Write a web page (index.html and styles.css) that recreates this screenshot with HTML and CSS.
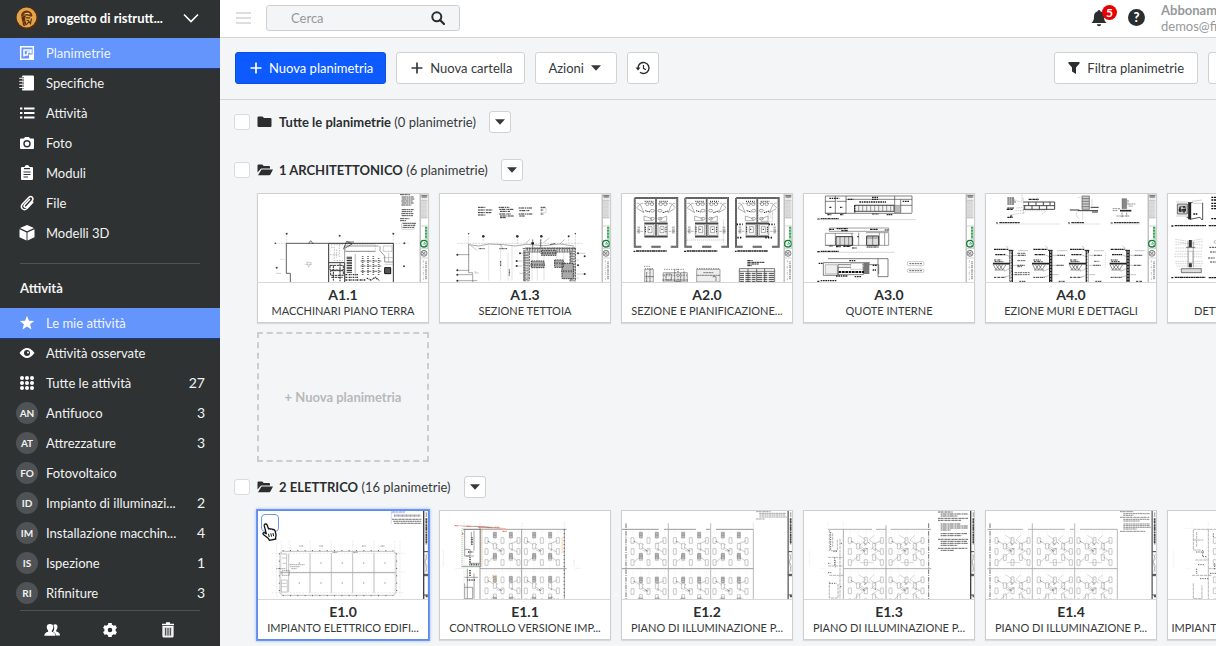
FILE: index.html
```html
<!DOCTYPE html>
<html lang="it">
<head>
<meta charset="utf-8">
<meta name="viewport" content="width=device-width, initial-scale=1">
<title>Planimetrie</title>
<link rel="stylesheet" href="styles.css">
</head>
<body>
<svg class="defs" aria-hidden="true">
  <defs>
    <symbol id="i-caret" viewBox="0 0 10 6"><path d="M0 0.300h10L5 5.800z" fill="currentColor"/></symbol>
    <symbol id="i-plus" viewBox="0 0 12 12"><path d="M6 0.500v11M0.500 6h11" stroke="currentColor" stroke-width="1.700" fill="none"/></symbol>
    <symbol id="i-folder" viewBox="0 0 16 14"><path d="M1.500 1.500h4l1.500 1.500h6.500q1 0 1 1v7q0 1-1 1h-12q-1 0-1-1v-8.500q0-1 1-1z" fill="currentColor"/></symbol>
    <symbol id="i-open" viewBox="0 0 16 14"><path d="M0.500 9.500v-7q0-1 1-1h3.700l1.500 1.500h5.300q1 0 1 1v1.500H4L0.500 9.500z" fill="currentColor"/><path d="M4.500 6.500H16l-2.600 5q-.4.800-1.200.8H1z" fill="currentColor"/></symbol>

    <!-- title block of the architectural sheets -->
    <symbol id="block" viewBox="0 0 26 264">
      <rect width="26" height="264" fill="#fff"/>
      <path d="M1 0v264M3.500 0v264" stroke="#777" stroke-width="1.200"/>
      <rect x="5" y="1" width="20" height="12" fill="#ccc"/>
      <path d="M6 5h18M8 9h14" stroke="#444" stroke-width="2"/>
      <rect x="5" y="18" width="20" height="54" fill="#dedede"/>
      <path d="M5 18h20M5 72h20M5 96h20M5 164h20M5 192h20" stroke="#777"/>
      <path d="M8 20v50M13 20v50M18 20v50" stroke="#aaa" stroke-dasharray="2 2"/>
      <circle cx="14" cy="149" r="10" fill="none" stroke="#137b38" stroke-width="4"/>
      <path d="M10 150h9l-5-7M18 154l5 5" stroke="#137b38" stroke-width="2" fill="none"/>
      <path d="M20 98v38" stroke="#38a355" stroke-width="6" stroke-dasharray="4 1 3 1"/>
      <path d="M24 98v66" stroke="#75c78b" stroke-width="2"/>
      <circle cx="14" cy="178" r="9" fill="#ddd" stroke="#555" stroke-width="2"/><path d="M8 174l11 9M9 183l9-10" stroke="#666" stroke-width="2"/>
      <path d="M12 198v60" stroke="#aaa" stroke-width="2" stroke-dasharray="8 4 2 4"/><path d="M20 202v56" stroke="#888" stroke-width="4" stroke-dasharray="3 1 5 2"/>
    </symbol>
    <!-- title block of the electrical sheets -->
    <symbol id="eblock" viewBox="0 0 16 264">
      <rect width="16" height="264" fill="#fff"/>
      <path d="M2 0v264" stroke="#111" stroke-width="4"/>
      <path d="M14.500 0v264" stroke="#999"/>
      <path d="M10 4v14" stroke="#999" stroke-width="4"/>
      <path d="M10 22v78" stroke="#111" stroke-width="5" stroke-dasharray="5 1 9 1 3 1"/>
      <path d="M3 122h13M3 190h13M3 194h13M3 252h13" stroke="#111" stroke-width="3"/>
      <path d="M6 130l6 12-6 10 6 14-5 18M12 128l-6 26 6 28" fill="none" stroke="#777" stroke-width="1.500"/>
      <path d="M8 256h6" stroke="#222" stroke-width="6"/>
    </symbol>
    <!-- one lighting bay: luminaires and wiring -->
    <symbol id="bay" viewBox="0 0 127 118">
      <path d="M6 8h116M6 37h116M6 66h116M6 95h116M20 4v110M44 4v110M68 4v110M92 4v110M116 4v110" stroke="#c5c5c5" stroke-width="1" stroke-dasharray="2 4"/>
      <g fill="#fff" stroke="#777" stroke-width="1.400">
        <path d="M15 25h9v17h-9zM15 58h9v17h-9zM15 91h9v17h-9zM40 42h9v17h-9zM40 76h9v17h-9zM63 25h9v17h-9zM63 58h9v17h-9zM63 91h9v17h-9zM88 42h9v17h-9zM88 76h9v17h-9zM111 25h9v17h-9zM111 58h9v17h-9zM111 91h9v17h-9z"/>
      </g>
      <path d="M24 35l17 11M48 54l16 11M24 98l20-17M92 44l22-10M95 58l16 10M94 82l17 12M50 62q14 8 20-2" stroke="#777" stroke-width="1.400" fill="none"/>
      <path d="M24 35l3 4M50 46h2M63 66l-4-5M94 62h4" stroke="#555" stroke-width="2.500"/>
    </symbol>
    <symbol id="dark" viewBox="0 0 127 118">
      <path d="M40 9h9v17h-9zM88 9h9v17h-9zM40 72h9v17h-9zM88 72h9v17h-9z" fill="#b5b5b5" stroke="#555" stroke-width="1.500"/>
      <path d="M40 14h9M40 19h9M88 14h9M88 19h9M40 77h9M40 82h9M88 77h9M88 82h9" stroke="#555" stroke-width="1.500"/>
    </symbol>
    <symbol id="zig" viewBox="0 0 127 118">
      <path d="M46 18l22 14-20 16 16 12M92 18l-14 14 20 14-16 16M46 80l20-16M84 78l22-14M50 100h40" stroke="#999" stroke-width="1.400" fill="none"/>
      <path d="M60 40l8 6M62 48l8-4M74 38l6 6M66 58h8" stroke="#777" stroke-width="2"/>
    </symbol>
    <!-- restroom plan -->
    <symbol id="room" viewBox="0 0 136 168">
      <path d="M4 4h128v146H112M24 150H4V4M82 150H54" fill="none" stroke="#555" stroke-width="6"/>
      <path d="M4 4h128v146H112M24 150H4V4M82 150H54" fill="none" stroke="#aaa" stroke-width="2" stroke-dasharray="3 2"/>
      <path d="M68 7v114M33 80h70M33 120h70" stroke="#444" stroke-width="5"/><path d="M68 7v114" stroke="#aaa" stroke-width="2" stroke-dasharray="3 2"/>
      <path d="M10 20h52M74 20h52M10 104h20M106 104h20" stroke="#555" stroke-width="1.300" stroke-dasharray="8 3"/>
      <path d="M10 34l10-12 12 26-20-12zM126 34l-10-12-12 26 20-12M32 58l24 8M32 58v14h26M76 68l24-10v16H78" stroke="#666" stroke-width="1.500" fill="none"/>
      <path d="M34 14h26M78 14h26" stroke="#444" stroke-width="4" stroke-dasharray="3 3"/>
      <g fill="none" stroke="#555" stroke-width="1.500"><circle cx="42" cy="22" r="5"/><circle cx="56" cy="22" r="5"/><circle cx="82" cy="22" r="5"/><circle cx="96" cy="22" r="5"/><path d="M34 84h28v32H34zM74 84h28v32H74zM44 90h12v18H44zM80 90h12v18H80z"/><ellipse cx="57" cy="42" rx="6" ry="4"/><ellipse cx="57" cy="66" rx="6" ry="4"/><ellipse cx="80" cy="42" rx="6" ry="4"/><ellipse cx="80" cy="66" rx="6" ry="4"/></g>
      <path d="M36 42l14 4M88 48l16-5M46 98h6M84 98h6M36 90v20M98 90v20" stroke="#222" stroke-width="3" stroke-dasharray="4 2"/>
      <path d="M16 90v22M120 90v22" stroke="#777" stroke-width="8" stroke-dasharray="1.500 2"/>
      <path d="M0 164h6M8 163h92" stroke="#222" stroke-width="4" stroke-dasharray="9 1 5 1"/>
    </symbol>
    <!-- wall section -->
    <symbol id="wall" viewBox="0 0 116 116">
      <path d="M4 14h42M8 30h30" stroke="#222" stroke-width="4" stroke-dasharray="7 1 4 1"/>
      <path d="M4 46h22M6 51h26M4 98h34M76 32h24M74 62h22M80 110h20" stroke="#333" stroke-width="3" stroke-dasharray="6 2 3 1"/>
      <path d="M46 14l8 6M38 30l14 6M76 18h30M34 80l18-8M34 98l16-5M40 4l8 7M60 32h38M60 62h34M60 90h20" stroke="#777" stroke-width="1.300"/>
      <path d="M0 57h52" stroke="#222" stroke-width="5"/>
      <path d="M2 60l8 15 10-15 10 15 10-15M6 76h30M10 60l10 15 10-15" stroke="#555" fill="none" stroke-width="2"/>
      <path d="M56 18v98" stroke="#222" stroke-width="10"/><path d="M56 20v96" stroke="#bbb" stroke-width="4" stroke-dasharray="4 5"/>
      <path d="M48 17h14" stroke="#111" stroke-width="3"/>
    </symbol>
  </defs>
</svg>

<div class="app">
  <aside class="sidebar">
    <button class="project" type="button">
      <svg class="avatar" viewBox="0 0 22 22"><circle cx="11" cy="11" r="11" fill="#5a2f0c"/><circle cx="10.500" cy="10.500" r="9.900" fill="#e2a54e"/><path d="M5 9.500Q5 4 10.500 3.500 16 4 16.500 9l-1.500.8Q10 7.500 5 9.500z" fill="#6b3510"/><path d="M7.500 7.500Q9 5 13 6l1.500 1.700Q11 6.500 7.500 7.500z" fill="#f3c06c"/><path d="M6 10.200l3-.7-.5 3 1 4-2.500-1.800zM10 10.800h4M10.500 13.500h2.500M8 18.500l3-1.500 2-2.500 1.500 2 1-5" stroke="#5a2f0c" stroke-width="1.200" fill="none"/><path d="M6 10l2-.5.5 5-1.500-.5zM6.500 15l2.500 2-2 2z" fill="#5a2f0c"/></svg>
      <strong>progetto di ristrutt...</strong>
      <svg class="chev" viewBox="0 0 16 10"><path d="M1 1.500l7 7 7-7" fill="none" stroke="#fff" stroke-width="1.600"/></svg>
    </button>
    <nav aria-label="Progetto">
      <a class="item active" href="#"><span class="ico"><svg viewBox="0 0 16 16"><path d="M1.700 1.700h12.600v12.600H1.700z" fill="none" stroke="#fff" stroke-width="1.500"/><path d="M5 11.500V5h7v3.500M5 5h7v2H8.500v3H5z" fill="none" stroke="#fff" stroke-width="1.500"/><path d="M10 9.500h5V15h-5z" fill="#fff"/></svg></span>Planimetrie</a>
      <a class="item" href="#"><span class="ico"><svg viewBox="0 0 16 16"><path d="M4 .5h10q1 0 1 1v13q0 1-1 1H4q-1 0-1-1v-13q0-1 1-1z" fill="#fff"/><path d="M1 3.300h4M1 6.300h4M1 9.300h4M1 12.500h4" stroke="#2e3233" stroke-width="2.200"/><path d="M.7 3.300h4M.7 6.300h4M.7 9.300h4M.7 12.500h4" stroke="#fff" stroke-width="1.100" stroke-linecap="round"/></svg></span>Specifiche</a>
      <a class="item" href="#"><span class="ico"><svg viewBox="0 0 16 16"><path d="M1 3.500h2.400M1 8h2.400M1 12.500h2.400M5 3.500h10.500M5 8h10.500M5 12.500h10.500" stroke="#fff" stroke-width="2.200"/></svg></span>Attività</a>
      <a class="item" href="#"><span class="ico"><svg viewBox="0 0 16 16"><path d="M2 3.500h3l1-1.500h4l1 1.500h3q1 0 1 1V13q0 1-1 1H2q-1 0-1-1V4.500q0-1 1-1z" fill="#fff"/><circle cx="8" cy="8.700" r="3" fill="none" stroke="#2e3233" stroke-width="1.400"/></svg></span>Foto</a>
      <a class="item" href="#"><span class="ico"><svg viewBox="0 0 16 16"><path d="M3 2h2.500q.5-2 2.500-2t2.500 2H13q1 0 1 1v11q0 1-1 1H3q-1 0-1-1V3q0-1 1-1z" fill="#fff"/><path d="M5 3.700h6M4.500 7h7M4.500 9.500h7M4.500 12h4.500" stroke="#2e3233" stroke-width="1.200"/></svg></span>Moduli</a>
      <a class="item" href="#"><span class="ico"><svg viewBox="0 0 16 16"><path d="M10.500 4.500l-5 5.300q-1 1.500.2 2.300 1 .6 2-.4l5.500-6q1.500-2 0-3.500-1.800-1.400-3.500.3L3.500 9q-2.200 2.700-.2 4.800 2.200 1.900 4.700-.3l5.800-6.200" fill="none" stroke="#fff" stroke-width="1.500" stroke-linecap="round"/></svg></span>File</a>
      <a class="item" href="#"><span class="ico"><svg viewBox="0 0 16 16"><path d="M8 0l7 3-7 3.300L1 3zM.5 4.300l7 3.200V15.500l-7-3.300zM15.500 4.300l-7 3.200V15.500l7-3.300z" fill="#fff"/></svg></span>Modelli 3D</a>
    </nav>
    <hr>
    <h2>Attività</h2>
    <nav aria-label="Attività">
      <a class="item active" href="#"><span class="ico"><svg viewBox="0 0 16 16"><path d="M8 .8l1.900 4.900 5.300.3-4.100 3.300 1.400 5.100L8 11.500l-4.500 2.900 1.400-5.100L.8 6l5.300-.3z" fill="#fff"/></svg></span>Le mie attività</a>
      <a class="item" href="#"><span class="ico"><svg viewBox="0 0 16 16"><path d="M.5 8Q8-2 15.500 8 8 18 .5 8z" fill="#fff"/><circle cx="8" cy="8" r="3" fill="#2e3233"/><circle cx="9" cy="7.500" r="1" fill="#fff"/></svg></span>Attività osservate</a>
      <a class="item" href="#"><span class="ico"><svg viewBox="0 0 16 16"><g fill="#fff"><circle cx="3" cy="3" r="2"/><circle cx="8" cy="3" r="2"/><circle cx="13" cy="3" r="2"/><circle cx="3" cy="8" r="2"/><circle cx="8" cy="8" r="2"/><circle cx="13" cy="8" r="2"/><circle cx="3" cy="13" r="2"/><circle cx="8" cy="13" r="2"/><circle cx="13" cy="13" r="2"/></g></svg></span>Tutte le attività<b>27</b></a>
      <a class="item" href="#"><span class="badge">AN</span>Antifuoco<b>3</b></a>
      <a class="item" href="#"><span class="badge">AT</span>Attrezzature<b>3</b></a>
      <a class="item" href="#"><span class="badge">FO</span>Fotovoltaico</a>
      <a class="item" href="#"><span class="badge">ID</span>Impianto di illuminazi...<b>2</b></a>
      <a class="item" href="#"><span class="badge">IM</span>Installazione macchin...<b>4</b></a>
      <a class="item" href="#"><span class="badge">IS</span>Ispezione<b>1</b></a>
      <a class="item" href="#"><span class="badge">RI</span>Rifiniture<b>3</b></a>
    </nav>
    <div class="tools">
      <button type="button" aria-label="Persone"><svg viewBox="0 0 16 16"><path d="M10 2.500q3.500-.8 3.500 2.500 0 2-1.300 3.300v1.200q3.800.8 3.800 4h-4q0-2.500-3-3.500 1.500-2 1.200-4.500 0-1.800-1-2.300z" fill="#fff"/><path d="M6 2q3.300 0 3.300 3.300 0 2-1.500 3.400v1.100q3.700.8 3.700 3.900H.3q0-3.100 3.900-3.900V8.700Q2.700 7.300 2.700 5.300 2.700 2 6 2z" fill="#fff"/></svg></button>
      <button type="button" aria-label="Impostazioni"><svg viewBox="0 0 16 16"><circle cx="8" cy="8" r="4" fill="none" stroke="#fff" stroke-width="3.400"/><path d="M8 1v3M8 12v3M1.900 4.500l2.600 1.500M11.500 10l2.600 1.500M1.900 11.500L4.500 10M11.500 6l2.600-1.500" stroke="#fff" stroke-width="3.600"/></svg></button>
      <button type="button" aria-label="Cestino"><svg viewBox="0 0 16 16"><path d="M2 2.500h12M6 1.200h4" stroke="#fff" stroke-width="1.700"/><path d="M3 4.500h10V14q0 1-1 1H4q-1 0-1-1z" fill="#ddd" stroke="#fff" stroke-width="1.200"/><path d="M5.700 6v7.500M8 6v7.500M10.300 6v7.500" stroke="#2e3233" stroke-width="1"/></svg></button>
    </div>
  </aside>

  <main class="main">
    <header class="topbar">
      <button class="menu" type="button" aria-label="Menu"><svg viewBox="0 0 15 14"><path d="M0 2h15M0 7h15M0 12h15" stroke="#dedede" stroke-width="2"/></svg></button>
      <form class="search" role="search">
        <input type="search" placeholder="Cerca" aria-label="Cerca">
        <button type="button" aria-label="Avvia ricerca"><svg viewBox="0 0 14 14"><circle cx="5.800" cy="5.800" r="4.500" fill="none" stroke="#2b2e2f" stroke-width="2"/><path d="M9 9l4 4" stroke="#2b2e2f" stroke-width="2.300" stroke-linecap="round"/></svg></button>
      </form>
      <div class="user">
        <button class="bell" type="button" aria-label="Notifiche"><svg viewBox="0 0 16 18"><path d="M8 1q1.300 0 1.300 1.300 3.700 1 3.700 5.200 0 4.500 2.500 6.500H.5Q3 12 3 7.500q0-4.200 3.700-5.200Q6.700 1 8 1zM5.800 15.300h4.400Q10 17.300 8 17.300t-2.200-2z" fill="#2b2e2f"/></svg><span class="count">5</span></button>
        <button class="help" type="button" aria-label="Aiuto">?</button>
        <a class="account" href="#"><strong>Abbonamento</strong><span>demos@fieldwire</span></a>
      </div>
    </header>

    <div class="toolbar">
      <button class="btn primary" type="button"><svg class="plus"><use href="#i-plus"/></svg>Nuova planimetria</button>
      <button class="btn" type="button"><svg class="plus"><use href="#i-plus"/></svg>Nuova cartella</button>
      <button class="btn" type="button">Azioni<svg class="caret"><use href="#i-caret"/></svg></button>
      <button class="btn square" type="button" aria-label="Cronologia"><svg viewBox="0 0 16 16"><path d="M3 9V8a5.500 5.500 0 1 1 2 4.200" fill="none" stroke="#2b2e2f" stroke-width="1.400"/><path d="M.5 7.500h5L3 10.600z" fill="#2b2e2f"/><path d="M8.500 5v3.300l2.300 1.400" fill="none" stroke="#2b2e2f" stroke-width="1.200"/></svg></button>
      <div class="right">
        <button class="btn filter" type="button"><svg viewBox="0 0 12 12"><path d="M.5 0h11v1.500L8 5.500V12L4 9.500v-4L.5 1.500z" fill="#2b2e2f"/></svg>Filtra planimetrie</button>
        <button class="btn square" type="button" aria-label="Vista"></button>
      </div>
    </div>

    <div class="content">
      <section>
        <div class="folder"><input type="checkbox" id="f0"><svg class="fi"><use href="#i-folder"/></svg><label for="f0"><strong>Tutte le planimetrie</strong> (0 planimetrie)</label><button type="button" aria-label="Apri menu"><svg class="caret"><use href="#i-caret"/></svg></button></div>
      </section>

      <section>
        <div class="folder"><input type="checkbox" id="f1"><svg class="fi"><use href="#i-open"/></svg><label for="f1"><strong>1 ARCHITETTONICO</strong> (6 planimetrie)</label><button type="button" aria-label="Apri menu"><svg class="caret"><use href="#i-caret"/></svg></button></div>
        <div class="cards">
          <a class="card" href="#">
            <svg class="plan" viewBox="24 24 510 264" preserveAspectRatio="xMidYMin slice">
              <use href="#block" x="508" y="24" width="26" height="264"/>
              <path d="M450 26h30M455 33h36M455 39h38M454 45h34M455 51h36M454 57h30M455 71h36M455 77h32M454 83h36M455 89h34M450 98h28M450 104h18M458 112h40M460 118h36M458 124h34" stroke="#555" stroke-width="3" stroke-dasharray="13 1 7 1 4 1"/>
              <rect x="455" y="112" width="38" height="18" rx="3" fill="none" stroke="#777"/>
              <path d="M76 172h400M110 140v34M430 140v34" stroke="#999" stroke-dasharray="6 3"/>
              <path d="M109 172h127M109 172v90h12v26" stroke="#444" stroke-width="2.500" fill="none"/>
              <path d="M236 172h194v116M236 172v116M236 230h48v58" stroke="#333" stroke-width="3" fill="none"/>
              <path d="M284 230v-50h102M390 180v14l14 16v18h26M286 196h90" stroke="#666" stroke-width="2" fill="none"/>
              <path d="M286 176h90v20h-90z" fill="none" stroke="#666" stroke-dasharray="3 2"/>
              <path d="M243 176h36M243 184h10v40h26M268 176v40M260 190v26M240 206h26" fill="none" stroke="#888" stroke-width="1.500" stroke-dasharray="5 3"/>
              <path d="M294 212v50M302 212v50" stroke="#333" stroke-width="8" stroke-dasharray="3 2"/>
              <path d="M316 206v62M338 210v56M354 210v56M370 210v56M386 216v50" stroke="#444" stroke-width="5" stroke-dasharray="2 4"/>
              <path d="M332 225h62M332 240h62M332 256h62" stroke="#333" stroke-width="2" stroke-dasharray="14 4"/>
              <path d="M240 238h40v14h-40zM242 254h38v14h-38zM250 238v46M270 232v54M244 274h34" stroke="#333" fill="none" stroke-width="3" stroke-dasharray="8 2"/>
              <path d="M286 266h40M286 274h38M286 282h60M350 276l12 6 14-8 12 10" stroke="#333" stroke-width="4" stroke-dasharray="5 2 2 2" fill="none"/>
              <path d="M404 245h18v18h-18z" fill="#555" stroke="#111" stroke-width="3"/><path d="M400 180h26v16h-26zM416 200v30M400 215h28M404 235h24" fill="none" stroke="#666"/>
              <path d="M280 190l10-24 16 8-20 12M176 172l6-8 8 10M292 168h20" stroke="#222" stroke-width="2" fill="none"/>
              <path d="M164 235h22M170 228l6 16 8-14zM78 262h16M78 244h6" stroke="#777" fill="none"/><path d="M90 220h14" stroke="#da987e"/>
              <g fill="#444"><circle cx="269" cy="149" r="3"/><circle cx="110" cy="143" r="3"/><circle cx="430" cy="143" r="3"/><circle cx="76" cy="172" r="2.500"/><circle cx="463" cy="172" r="3"/><circle cx="462" cy="241" r="3"/><circle cx="80" cy="245" r="3"/></g>
            </svg>
            <span class="cap"><strong>A1.1</strong><span>MACCHINARI PIANO TERRA</span></span>
          </a>
          <a class="card" href="#">
            <svg class="plan" viewBox="570 24 510 264" preserveAspectRatio="xMidYMin slice">
              <use href="#block" x="1054" y="24" width="26" height="264"/>
              <path d="M684 64h24M684 72h44M684 80h40M684 87h24M746 64h32M748 70h44M750 76h30M748 84h34M750 90h42M750 95h18M806 66h40M808 74h30M806 84h42M808 90h16M872 64h14M872 72h8M872 84h8" stroke="#333" stroke-width="3" stroke-dasharray="6 1 10 2 3 2"/>
              <path d="M874 66h14v14h-14z" fill="none" stroke="#888"/>
              <path d="M622 172h374M656 140v120M976 140v50M700 150v20M802 150v24M874 150v24M956 150v20" stroke="#888" stroke-dasharray="6 3"/>
              <path d="M656 174v86h12v28M656 176l30 4 30-6 44 2 36 4 34-5 50 4 50-5 42 6M622 206h36M622 253h34M622 266h44M622 284h60" stroke="#555" stroke-width="1.500" fill="none"/>
              <path d="M716 178v106M752 178v106M774 200v84M786 180v104" stroke="#aaa"/><path d="M752 225v15M778 250v20M686 188h18M748 188h24" stroke="#444" stroke-width="3" stroke-dasharray="3 1"/>
              <path d="M662 178l20 16M760 190l-10-16M826 172l14-12M880 170l18-14M944 160l-14 14M676 255v6h10" stroke="#555" fill="none"/>
              <path d="M848 160v28M872 160v28M900 176l16-4" stroke="#333" stroke-width="2"/><path d="M844 172h8" stroke="#111" stroke-width="6"/>
              <path d="M826 192h142v94M828 192v94" stroke="#888" stroke-width="16" fill="none" stroke-dasharray="4 1"/><path d="M818 188h158M822 196v90M838 200v84M960 200v86M976 186v100" stroke="#444" stroke-width="2.500" fill="none" stroke-dasharray="7 2"/><path d="M826 192h146v90M830 194v90" stroke="#eee" stroke-width="5" fill="none" stroke-dasharray="3 5"/>
              <path d="M846 192v92M862 198v86M882 210v74M920 192v30M940 192v30" stroke="#aaa"/>
              <path d="M844 225h38v20h-38zM914 222h26v22h-26zM936 232h34v46h-34zM874 194h44v14h-44z" fill="#aaa" stroke="#444" stroke-width="3" stroke-dasharray="5 2"/>
              <path d="M842 236h44M912 232h32M934 256h38M876 201h42" stroke="#444" stroke-width="6" stroke-dasharray="2 3"/>
              <path d="M798 225h20M798 240h20M808 202h12M808 262h12M980 202h26M980 222h6M980 238h6M980 264h26M980 276h6" stroke="#666"/>
              <g fill="#333"><circle cx="700" cy="151" r="4"/><circle cx="802" cy="151" r="4"/><circle cx="874" cy="151" r="4"/><circle cx="956" cy="151" r="3"/><circle cx="622" cy="206" r="3"/><circle cx="622" cy="253" r="3"/><circle cx="622" cy="266" r="3"/><circle cx="622" cy="284" r="3"/><circle cx="1004" cy="211" r="3"/><circle cx="1004" cy="264" r="3"/><circle cx="984" cy="202" r="3"/><circle cx="984" cy="238" r="3"/><circle cx="810" cy="202" r="3"/><circle cx="800" cy="225" r="3"/><circle cx="800" cy="240" r="3"/><circle cx="656" cy="143" r="2"/><circle cx="976" cy="143" r="2"/></g>
            </svg>
            <span class="cap"><strong>A1.3</strong><span>SEZIONE TETTOIA</span></span>
          </a>
          <a class="card" href="#">
            <svg class="plan" viewBox="18 24 510 264" preserveAspectRatio="xMidYMin slice">
              <use href="#block" x="502" y="24" width="26" height="264"/>
              <use href="#room" x="52" y="32" width="136" height="168"/><use href="#room" x="204" y="32" width="136" height="168"/><use href="#room" x="356" y="32" width="136" height="168"/>
              <path d="M456 78h14v28h-14M456 84h14M456 90h14M456 96h14M212 162h116M212 126v44M322 100v70" stroke="#777" fill="none" stroke-dasharray="4 2"/>
              <path d="M362 115h18M458 115h18M364 155h16M448 155h20" stroke="#111" stroke-width="5" stroke-dasharray="4 4"/>
              <path d="M86 250h26v38h-26zM142 260h72v28h-72zM242 250h70v38h-70z" fill="#eee" stroke="#555" stroke-width="1.500"/>
              <path d="M84 241h20M86 248h28M144 250h60M242 248h70" stroke="#555" stroke-width="2" stroke-dasharray="4 3"/>
              <path d="M92 258v30M102 250v38M88 272h26M150 264h16v18h-16zM176 250v36h18v-26M138 282h78M204 256v30M242 268h70M290 272h10v14M262 260h30" stroke="#444" stroke-width="2" fill="none" stroke-dasharray="7 1"/>
              <path d="M140 268h74M186 250v36" stroke="#777" stroke-width="5" stroke-dasharray="2 3"/>
              <path d="M394 224h16M394 229h52M394 234h34M394 239h14" stroke="#222" stroke-width="3" stroke-dasharray="8 1 4 1"/>
              <path d="M370 248h106v40M370 248v40M370 256h106M396 248v40M422 248v40M446 248v40" stroke="#333" fill="none" stroke-width="2"/>
              <path d="M372 262h102M372 268h102M372 274h102M372 280h102M372 286h102" stroke="#444" stroke-width="3" stroke-dasharray="12 4 16 3"/>
            </svg>
            <span class="cap"><strong>A2.0</strong><span>SEZIONE E PIANIFICAZIONE...</span></span>
          </a>
          <a class="card" href="#">
            <svg class="plan" viewBox="564 24 510 264" preserveAspectRatio="xMidYMin slice">
              <use href="#block" x="1048" y="24" width="26" height="264"/>
              <path d="M628 30h62v52h-62zM658 30v52M690 30h198v50M716 58h120M854 40v40M628 46h30M662 46h30M836 30v50M690 40h198M888 58h-34M628 82h260" stroke="#444" fill="none" stroke-width="2"/>
              <path d="M716 58h118v18H716z" fill="#f3f3f3" stroke="#333" stroke-width="2.500"/><path d="M728 58v18M740 58v18M752 58v18M764 58v18M776 58v18M788 58v18M800 58v18M812 58v18M824 58v18" stroke="#555" stroke-width="1.700"/>
              <path d="M836 58h18v22h-18z" fill="#bbb" stroke="#333"/><path d="M640 64h8M672 64h8M696 40h16M768 34h18M768 40h18M730 48h80M860 46h20M716 58v22M640 37h30" stroke="#222" stroke-width="4" stroke-dasharray="5 2"/>
              <path d="M634 86h12M672 86h10M768 84h20M812 86h18M604 99h8M614 98h54" stroke="#333" stroke-width="3.500" stroke-dasharray="6 1 3 1"/><path d="M604 101h296M604 199h232" stroke="#888"/>
              <path d="M628 142h30v36h-30zM640 126h178v10H640zM750 140h68v38M658 142h54M728 140v38M790 140v38M806 140v38M628 178h190" stroke="#555" fill="none" stroke-width="1.700"/>
              <path d="M660 152h50v26h-50zM752 150h36v28h-36z" fill="#ddd" stroke="#333" stroke-width="3"/><path d="M672 152v26M686 152v26M698 152v26M770 150v28M752 156h36M708 142v36" stroke="#333" stroke-width="1.500"/>
              <path d="M640 130h14M662 128h34M676 134h20M724 152h4M762 130h24M806 132h12M640 180h10M660 182h14M682 181h22M752 183h36M708 186h14M604 197h8M614 196h54" stroke="#222" stroke-width="3.500" stroke-dasharray="6 1 3 1"/>
              <path d="M622 230h140M622 230v38h44v-32h122v28M786 218v54h30v-54h-30M636 218h150M666 244h76v22h-76z" stroke="#444" fill="none" stroke-width="2"/>
              <path d="M628 236h36v28h-36z" fill="#eee" stroke="#444"/><path d="M704 232h36v18h-36z" fill="#fff" stroke="#666"/><path d="M742 230h18v34h-18z" fill="#777"/>
              <path d="M668 258h76" stroke="#111" stroke-width="6" stroke-dasharray="8 2"/><path d="M608 232h12M700 224h18M770 238h12M770 252h10M660 270h36M716 272h20M604 286h8M614 284h48" stroke="#222" stroke-width="4" stroke-dasharray="5 2"/>
              <rect x="874" y="227" width="50" height="12" rx="4" fill="none" stroke="#666"/><rect x="874" y="249" width="50" height="10" rx="4" fill="none" stroke="#666"/><path d="M880 233h38M880 254h38" stroke="#666" stroke-width="3" stroke-dasharray="6 2"/>
            </svg>
            <span class="cap"><strong>A3.0</strong><span>QUOTE INTERNE</span></span>
          </a>
          <a class="card" href="#">
            <svg class="plan" viewBox="18 24 510 264" preserveAspectRatio="xMidYMin slice">
              <use href="#block" x="502" y="24" width="26" height="264"/>
              <path d="M130 48h94v22H130M130 59h94M146 48v11M168 48v11M190 48v11M210 48v11M134 59v11M156 59v11M178 59v11M200 59v11" stroke="#444" stroke-width="3" fill="none"/>
              <path d="M106 74h90M130 36v50M126 26v20M172 34v12M92 86l44-6M200 74l-14 10M102 42l28 8M108 66l24-2" stroke="#777" fill="none" stroke-dasharray="5 2"/>
              <path d="M82 36h20M82 42h22M82 48h26M82 54h20M82 66h20M80 70h18M82 94h16M146 40h30M90 90h8" stroke="#222" stroke-width="3.500" stroke-dasharray="7 1 4 1"/>
              <path d="M48 111h6M58 110h62M264 111h6M274 110h38M392 111h6M402 110h76" stroke="#333" stroke-width="3.500" stroke-dasharray="8 1 5 1"/><path d="M48 114h190M264 114h98M392 114h88" stroke="#aaa"/>
              <path d="M306 30h22v40h-22zM306 38h22M306 46h22M306 54h22M306 62h22" fill="#ccc" stroke="#555" stroke-width="2"/><path d="M294 74h60M270 72h28M332 64h24M336 78h18" stroke="#333" stroke-width="3"/><path d="M266 72h28q-12 14 4 28M308 76v26M336 40v30M292 34h10" stroke="#999" fill="none"/>
              <path d="M426 38h14v30h-14z" fill="#888" stroke="#444"/><path d="M420 74h34" stroke="#222" stroke-width="5"/><path d="M398 68h22M398 74h16M446 54h20M446 60h12M426 80v16M440 80v12M444 42v16M410 90h38" stroke="#555" stroke-width="2" stroke-dasharray="6 2"/>
              <use href="#wall" x="38" y="176" width="116" height="116"/><use href="#wall" x="156" y="176" width="116" height="116"/><use href="#wall" x="266" y="176" width="116" height="116"/><use href="#wall" x="388" y="176" width="116" height="116"/>
              <path d="M92 196v90M324 200v90" stroke="#fff" stroke-width="4"/><path d="M90 196v90M96 196v60M104 266h46M104 260h46M112 202h26M112 224h26M112 242h14M342 226h16" stroke="#444" stroke-width="2.500" stroke-dasharray="8 2 4 1"/><path d="M376 200v50" stroke="#999" stroke-dasharray="4 3"/>
            </svg>
            <span class="cap"><strong>A4.0</strong><span>EZIONE MURI E DETTAGLI</span></span>
          </a>
          <a class="card" href="#">
            <svg class="plan" viewBox="564 24 510 264" preserveAspectRatio="xMidYMin slice">
              <path d="M628 50v44h-8M624 50h14M668 50v52M630 100l30-6 6 8" stroke="#333" stroke-width="2.500" fill="none"/><path d="M629 50v50" stroke="#222" stroke-width="9"/>
              <path d="M592 54h30v30h-30zM600 62h16v14h-16z" fill="#ccc" stroke="#333" stroke-width="2"/><path d="M596 72h24M600 64v16M612 60v20M640 84h12M694 34h14M694 42h14M694 52h14M694 60h14M694 68h14M694 98h14" stroke="#111" stroke-width="4" stroke-dasharray="6 2"/>
              <path d="M588 48h36M640 52h26M588 90h38M636 46l30-4" stroke="#777"/>
              <path d="M574 120h6M584 119h94M686 119h22M574 275h6M584 274h92M686 275h22" stroke="#222" stroke-width="4" stroke-dasharray="9 1 5 1"/>
              <path d="M586 160l40 6 44-8M586 168l40 4 44-6M586 176l38-4 46 6M586 186h84M586 196h80M584 204h84M584 212h84M586 226h84M586 233h84M590 240h76M596 250h70" stroke="#aaa" stroke-width="1.500" stroke-dasharray="5 2" fill="none"/>
              <path d="M624 166v78M640 166v78" stroke="#888" stroke-width="2"/><path d="M631 162v22M631 232v12" stroke="#333" stroke-width="9"/><path d="M626 196v34h12v-34z" fill="#fff" stroke="#666"/><path d="M604 248h60v12h-60zM618 184h28" fill="#ddd" stroke="#444" stroke-width="2"/>
              <path d="M688 184h20M690 198h18M684 216h20M690 228h18" stroke="#444" stroke-width="3" stroke-dasharray="6 2"/><circle cx="706" cy="168" r="4" fill="none" stroke="#444"/>
            </svg>
            <span class="cap"><strong>A5.0</strong><span>DETTAGLI DI FINESTRE</span></span>
          </a>
          <button class="new" type="button">+ Nuova planimetria</button>
        </div>
      </section>

      <section>
        <div class="folder"><input type="checkbox" id="f2"><svg class="fi"><use href="#i-open"/></svg><label for="f2"><strong>2 ELETTRICO</strong> (16 planimetrie)</label><button type="button" aria-label="Apri menu"><svg class="caret"><use href="#i-caret"/></svg></button></div>
        <div class="cards electric">
          <div class="card selected">
            <svg class="plan" viewBox="24 33 510 264" preserveAspectRatio="xMidYMin slice">
              <use href="#eblock" x="519" y="33" width="16" height="264"/>
              <path d="M424 34h42M424 38h40" stroke="#5f88d8" stroke-width="2" stroke-dasharray="12 1 7 2"/><path d="M432 47h80" stroke="#888" stroke-width="7" stroke-dasharray="3 1"/>
              <path d="M426 58h88M430 64h84M432 70h82" stroke="#777" stroke-width="3.500" stroke-dasharray="6 1 9 1 3 1"/><path d="M424 36v36" stroke="#5f88d8"/>
              <path d="M66 160h400M66 216h400M66 278h396M94 122v170M118 122v50M180 122v170M244 122v170M308 122v170M372 122v170M434 122v170M450 122v170M80 122v170" stroke="#bbb" stroke-dasharray="6 3"/>
              <path d="M90 160l8-6h332l8 6v118l-8 8H98l-8-8z" fill="none" stroke="#888" stroke-width="2"/><path d="M98 152h332M98 287h332M440 160v118M88 160v118" stroke="#333" stroke-width="3" stroke-dasharray="3 19"/>
              <path d="M90 218h346" stroke="#666" stroke-width="2"/><path d="M180 160v118M244 160v118M308 160v118M372 160v118" stroke="#999" stroke-width="2"/>
              <path d="M94 162h16v54M94 240h18v36H94zM98 190h10M116 162v114M96 250h14M96 260h14M96 174h14" stroke="#777" fill="none" stroke-width="1.500"/>
              <path d="M78 206h28M96 212h22v14H96zM118 194h46M120 200h30M124 206h16" stroke="#666" stroke-width="2" fill="none" stroke-dasharray="5 1"/>
              <path d="M146 189h4M146 249h4M211 189h4M211 249h4M275 189h4M275 249h4M339 189h4M339 249h4M403 189h4M403 249h4" stroke="#777" stroke-width="3"/>
              <path d="M148 138h12M208 138h12M336 138h12M392 138h12M248 157h14M308 157h16" stroke="#777" stroke-width="3" stroke-dasharray="3 1"/>
            </svg>
            <input class="pick" type="checkbox" aria-label="Seleziona E1.0">
            <svg class="cursor" viewBox="0 0 16 18"><path d="M3.500 1.200Q5 .6 5.600 2l1.500 4q1-.8 2 .2 1.200-.8 2.200.4 1.600-.4 2.200 1.100l1 3.800q.2 1.500-.4 3l.2 1.500-6.500 1.300-.8-1.800-4.800-3.700q-1.300-1.300-.4-2 1-.6 2.200.5l.8.4L2.700 2.700q-.2-1 .8-1.500z" fill="#fff" stroke="#111" stroke-width="1.300" stroke-linejoin="round"/><path d="M7 10.800l.7 3.200M9.300 10.400l.7 3.200M11.500 10l.6 3.200" stroke="#111"/></svg>
            <span class="cap"><strong>E1.0</strong><span>IMPIANTO ELETTRICO EDIFI...</span></span>
          </div>
          <a class="card" href="#">
            <svg class="plan" viewBox="570 33 510 264" preserveAspectRatio="xMidYMin slice">
              <use href="#bay" x="690" y="88" width="127" height="118"/><use href="#dark" x="690" y="88" width="127" height="118"/><use href="#bay" x="808" y="88" width="127" height="118"/><use href="#dark" x="808" y="88" width="127" height="118"/>
              <use href="#bay" x="690" y="206" width="127" height="118"/><use href="#dark" x="690" y="220" width="127" height="118"/><use href="#bay" x="808" y="206" width="127" height="118"/><use href="#dark" x="808" y="220" width="127" height="118"/>
              <path d="M640 88h310M690 206h260M815 88v209M943 88v209M690 80v217" stroke="#777" stroke-width="2.500"/><path d="M943 88v209" stroke="#444" stroke-width="4" stroke-dasharray="3 8"/>
              <path d="M642 68v230M690 68v20M816 68v20M943 66v22M616 205h24M976 205h14M972 180v20M580 150v50" stroke="#aaa" stroke-dasharray="5 3"/>
              <path d="M640 88h52v112h-58M644 88v80h16v-20h-16M664 96v40M672 92v60M648 168h24M660 190h30M644 232h40M644 250v46h24v-34h-24M652 206v90M672 220v76" stroke="#555" fill="none" stroke-width="2"/>
              <path d="M666 112v22M654 156h16M660 172v20M658 194h30M652 240h24M660 210v20" stroke="#222" stroke-width="5" stroke-dasharray="3 2"/>
              <path d="M636 84v112M640 198h50" stroke="#60a568" stroke-width="2" stroke-dasharray="4 2"/><path d="M696 84v116" stroke="#d49b49" stroke-width="2" stroke-dasharray="5 2"/>
              <path d="M620 77l90 3 58 6M700 84l70 4" stroke="#eba28c" stroke-width="2"/><path d="M614 77h10M650 79h12M684 81h20M734 82h14M758 94h12M638 98v8" stroke="#dd6350" stroke-width="4" stroke-dasharray="6 2"/><path d="M936 112v48M728 226h12v10h-12z" stroke="#e5a95a" stroke-width="2.500" fill="none" stroke-dasharray="5 2"/>
            </svg>
            <span class="cap"><strong>E1.1</strong><span>CONTROLLO VERSIONE IMP...</span></span>
          </a>
          <a class="card" href="#">
            <svg class="plan" viewBox="18 33 510 264" preserveAspectRatio="xMidYMin slice">
              <use href="#eblock" x="514" y="33" width="16" height="264"/>
              <path d="M420 35h44M430 40h80M430 45h78M430 51h82M420 57h26" stroke="#777" stroke-width="2.500" stroke-dasharray="6 1 9 1 3 1"/>
              <use href="#bay" x="30" y="88" width="127" height="118"/><use href="#dark" x="30" y="88" width="127" height="118"/><use href="#bay" x="157" y="88" width="127" height="118"/><use href="#dark" x="157" y="88" width="127" height="118"/><use href="#bay" x="276" y="88" width="127" height="118"/><use href="#dark" x="276" y="88" width="127" height="118"/>
              <use href="#bay" x="30" y="208" width="127" height="118"/><use href="#dark" x="30" y="222" width="127" height="118"/><use href="#bay" x="157" y="208" width="127" height="118"/><use href="#dark" x="157" y="222" width="127" height="118"/><use href="#bay" x="276" y="208" width="127" height="118"/><use href="#dark" x="276" y="222" width="127" height="118"/>
              <path d="M18 88h110M144 88h96M270 88h12M300 88h112M18 206h394" stroke="#666" stroke-width="2.500"/><path d="M157 70v227M284 70v227M412 88v209" stroke="#999" stroke-width="2.500"/><path d="M30 70v227" stroke="#555" stroke-width="3" stroke-dasharray="14 3 3 3"/><path d="M412 68v20" stroke="#aaa"/>
            </svg>
            <span class="cap"><strong>E1.2</strong><span>PIANO DI ILLUMINAZIONE P...</span></span>
          </a>
          <a class="card" href="#">
            <svg class="plan" viewBox="564 33 510 264" preserveAspectRatio="xMidYMin slice">
              <use href="#eblock" x="1062" y="33" width="16" height="264"/>
              <path d="M966 36h44M974 42h82M974 48h50M966 55h90M966 61h70M974 72h60M974 78h82M974 84h82M974 90h30M974 101h80M974 107h62M966 118h90M974 124h80M974 130h82M974 136h50M966 145h88M974 151h40" stroke="#444" stroke-width="3" stroke-dasharray="6 1 9 1 3 1"/>
              <use href="#bay" x="682" y="88" width="127" height="118"/><use href="#zig" x="682" y="88" width="127" height="118"/><use href="#bay" x="804" y="88" width="127" height="118"/><use href="#zig" x="804" y="88" width="127" height="118"/>
              <use href="#bay" x="682" y="206" width="127" height="118"/><use href="#zig" x="682" y="206" width="127" height="118"/><use href="#bay" x="804" y="206" width="127" height="118"/><use href="#zig" x="804" y="206" width="127" height="118"/>
              <path d="M636 88h132M780 88h30M824 88h122M682 206h264M682 88v209M810 76v221" stroke="#888" stroke-width="2.500"/><path d="M938 70v227" stroke="#555" stroke-width="3" stroke-dasharray="14 3 3 3"/>
              <path d="M640 90v62h24v-34M636 172h46M636 198h46M640 226h42M640 244v50h26v-42M650 100v40M658 180v24M672 116v180" stroke="#777" fill="none" stroke-width="2" stroke-dasharray="9 2"/><path d="M644 96v56M652 154h12M636 190h8M636 218h10M640 250h22M656 172v24M674 130h6M672 260h6" stroke="#444" stroke-width="3" stroke-dasharray="4 3"/>
              <path d="M636 66v22M682 66v22M616 205h18M580 150v50" stroke="#bbb" stroke-dasharray="3 3"/>
            </svg>
            <span class="cap"><strong>E1.3</strong><span>PIANO DI ILLUMINAZIONE P...</span></span>
          </a>
          <a class="card" href="#">
            <svg class="plan" viewBox="18 33 510 264" preserveAspectRatio="xMidYMin slice">
              <use href="#eblock" x="514" y="33" width="16" height="264"/>
              <path d="M420 35h40M430 41h80M430 46h30M420 52h88M430 58h78M430 63h50M430 72h80M430 77h80M430 82h82M430 87h40M420 94h76" stroke="#555" stroke-width="2.500" stroke-dasharray="6 1 9 1 3 1"/>
              <use href="#bay" x="30" y="88" width="127" height="118"/><use href="#zig" x="30" y="88" width="127" height="118"/><use href="#bay" x="157" y="88" width="127" height="118"/><use href="#zig" x="157" y="88" width="127" height="118"/><use href="#bay" x="276" y="88" width="127" height="118"/><use href="#zig" x="276" y="88" width="127" height="118"/>
              <use href="#bay" x="30" y="206" width="127" height="118"/><use href="#zig" x="30" y="206" width="127" height="118"/><use href="#bay" x="157" y="206" width="127" height="118"/><use href="#zig" x="157" y="206" width="127" height="118"/><use href="#bay" x="276" y="206" width="127" height="118"/><use href="#zig" x="276" y="206" width="127" height="118"/>
              <path d="M22 88h106M144 88h110M270 88h12M300 88h112M22 206h390" stroke="#888" stroke-width="2.500"/><path d="M157 70v227M284 70v227M412 88v209" stroke="#999" stroke-width="2.500"/><path d="M30 70v227" stroke="#555" stroke-width="3" stroke-dasharray="14 3 3 3"/>
            </svg>
            <span class="cap"><strong>E1.4</strong><span>PIANO DI ILLUMINAZIONE P...</span></span>
          </a>
          <a class="card" href="#">
            <svg class="plan" viewBox="564 33 510 264" preserveAspectRatio="xMidYMin slice">
              <use href="#bay" x="685" y="88" width="127" height="118"/><use href="#bay" x="685" y="206" width="127" height="118"/>
              <path d="M640 88h70M640 90v60h24M685 88v209M636 226h60M640 250v46h26v-40M650 96v44M640 120h30M646 180h40M685 206h30" stroke="#777" fill="none" stroke-width="2" stroke-dasharray="10 2"/>
              <path d="M648 156h24M668 170h12M654 194h18M650 206v16M660 236h24M700 100v12M704 190v20M668 150v20M690 220h18" stroke="#444" stroke-width="3" stroke-dasharray="4 3"/><path d="M636 66v22M685 66v22M616 85h18M616 205h18M580 150v50" stroke="#bbb" stroke-dasharray="3 3"/>
            </svg>
            <span class="cap"><strong>E1.5</strong><span>IMPIANTO DI ILLUMINAZIONE...</span></span>
          </a>
        </div>
      </section>
    </div>
  </main>
</div>
</body>
</html>
```

FILE: styles.css
```css
* { box-sizing: border-box; }
body {
  margin: 0;
  font: 13px/20px Lato, "Open Sans", sans-serif;
  color: #36393a;
  background: #f4f5f7;
}
button, input { font: inherit; color: inherit; }
button { cursor: pointer; }
a { color: inherit; text-decoration: none; }
.defs { position: absolute; width: 0; height: 0; }

.app { display: flex; height: 100vh; overflow: hidden; }

/* sidebar */
.sidebar {
  flex: 0 0 220px;
  display: flex;
  flex-direction: column;
  background: #2e3233;
  color: #f2f2f2;
}
.project {
  flex: none;
  display: flex;
  align-items: center;
  height: 38px;
  padding: 0 21px 2px 16px;
  border: 0;
  background: none;
  color: #fff;
}
.project strong { margin-left: 9px; white-space: nowrap; }
.avatar { width: 22px; height: 22px; flex: none; }
.chev { width: 16px; height: 10px; margin-left: auto; }
.item {
  display: flex;
  align-items: center;
  height: 30px;
  padding: 0 15px 0 16px;
  white-space: nowrap;
}
.item.active { background: #6495fd; color: #eef4ff; box-shadow: 0 1px #173a8c; }
.item b { margin-left: auto; font-size: 14px; font-weight: 400; }
.ico, .badge {
  flex: none;
  display: flex;
  align-items: center;
  justify-content: center;
  width: 22px;
  height: 22px;
  margin-right: 8px;
}
.ico svg { width: 16px; height: 16px; }
.badge {
  border-radius: 50%;
  background: #505355;
  font-size: 10px;
  font-weight: 700;
}
hr {
  flex: none;
  width: 180px;
  height: 1px;
  margin: 15px auto 0;
  border: 0;
  background: #505354;
}
h2 { margin: 0; padding: 14px 20px 10px; font-size: 13px; line-height: 20px; }
.tools {
  display: flex;
  justify-content: space-between;
  margin: 2px 20px 0;
  padding: 11px 24px 8px;
  border-top: 1px solid #505354;
}
.tools button { padding: 0; border: 0; background: none; height: 16px; }
.tools svg { display: block; width: 16px; height: 16px; }

/* top bar */
.main { flex: 1; min-width: 0; overflow: hidden; }
.topbar {
  display: flex;
  align-items: center;
  height: 38px;
  padding: 0 0 2px 16px;
  background: #fff;
  border-bottom: 1px solid #d2d4d6;
}
.menu { height: 14px; padding: 0; border: 0; background: none; }
.menu svg { display: block; width: 15px; height: 14px; }
.search {
  display: flex;
  align-items: center;
  width: 194px;
  height: 26px;
  margin-left: 15px;
  padding: 0 14px 0 24px;
  border: 1px solid #cdcfd1;
  border-radius: 3px;
  background: #f4f5f7;
}
.search input { flex: 1; min-width: 0; padding: 0; border: 0; outline: 0; background: none; }
.search input::placeholder { color: #96999b; opacity: 1; }
.search button { padding: 0; border: 0; background: none; height: 14px; }
.search svg { display: block; width: 14px; height: 14px; }
.user { display: flex; align-items: center; margin-left: auto; }
.bell { position: relative; padding: 0; border: 0; background: none; height: 18px; }
.bell svg { display: block; width: 16px; height: 18px; }
.count {
  position: absolute;
  top: -4px;
  right: -10px;
  width: 15px;
  height: 15px;
  border-radius: 50%;
  background: #e60000;
  color: #fff;
  font-size: 12px;
  font-weight: 700;
  line-height: 15px;
}
.help {
  width: 17px;
  height: 17px;
  margin-left: 21px;
  padding: 0;
  border: 0;
  border-radius: 50%;
  background: #2b2e2f;
  color: #fff;
  font-size: 13px;
  font-weight: 900;
  line-height: 17px;
}
.account { width: 55px; margin-left: 16px; overflow: hidden; color: #96999b; line-height: 16px; }
.account strong, .account span { display: block; white-space: nowrap; }

/* toolbar */
.toolbar {
  display: flex;
  gap: 10px;
  padding: 14px 0 15px 15px;
  border-bottom: 1px solid #d2d4d6;
}
.btn {
  display: flex;
  align-items: center;
  justify-content: center;
  height: 32px;
  padding: 0 12px;
  border: 1px solid #d0d2d4;
  border-radius: 3px;
  background: #fff;
  white-space: nowrap;
}
.btn.primary { background: #0d5bff; border-color: #0d4fd8; color: #fff; }
.btn.square { width: 32px; padding: 0; }
.btn.square svg { width: 16px; height: 16px; }
.plus { width: 12px; height: 12px; margin: 0 7px 0 2px; }
.caret { width: 10px; height: 6px; }
.btn .caret { margin: 0 3px 0 7px; }
.right { display: flex; gap: 10px; margin: 0 -24px 0 auto; }
.filter { padding: 0 13px; }
.filter svg { width: 12px; height: 12px; margin-right: 7px; }

/* folders */
.content { padding: 11px 0 0 14px; }
section { padding-bottom: 14px; }
.folder { display: flex; align-items: center; height: 22px; margin-bottom: 12px; }
section:first-child .folder { margin-bottom: 0; }
section:first-child { padding-bottom: 26px; }
.folder input, .pick {
  appearance: none;
  width: 16px;
  height: 16px;
  margin: 0;
  border: 1px solid #d9dbdd;
  border-radius: 3px;
  background: #fff;
}
.fi { width: 16px; height: 14px; margin: 0 6px 0 7px; color: #2b2e2f; }
.folder button {
  display: flex;
  align-items: center;
  justify-content: center;
  width: 22px;
  height: 22px;
  margin-left: 13px;
  padding: 0;
  border: 1px solid #d0d2d4;
  border-radius: 3px;
  background: #fff;
}
.folder strong { color: #2b2e2f; }

/* sheets */
.cards {
  display: grid;
  grid-template-columns: repeat(6, 172px);
  gap: 9px 10px;
  margin-left: 23px;
}
.card {
  position: relative;
  display: flex;
  flex-direction: column;
  height: 130px;
  border: 1px solid #cdcfd0;
  background: #fff;
  box-shadow: 0 1px 1px #d9dbdd;
}
.card.selected { border-color: #5e8de8; box-shadow: 0 0 0 1px #6b98ee, 0 0 3px 1px #9cbcf6; }
.plan { display: block; flex: none; width: 170px; height: 88px; }
.electric .plan { opacity: .8; }
.cap {
  flex: 1;
  border-top: 1px solid #d5d7d8;
  padding-top: 4px;
  text-align: center;
  white-space: nowrap;
}
.cap strong, .cap span { display: block; }
.cap strong { font-size: 14px; line-height: 16px; color: #2b2e2f; }
.cap span { font-size: 11px; line-height: 16px; }
.pick { position: absolute; top: 3px; left: 3px; width: 18px; height: 18px; border: 1px solid #6d98ec; border-radius: 4px; }
.cursor { position: absolute; top: 12px; left: 3px; width: 17px; height: 18px; }
.new {
  height: 130px;
  border: 2px dashed #cccdce;
  background: none;
  color: #b7b9ba;
  font-weight: 700;
}
```
